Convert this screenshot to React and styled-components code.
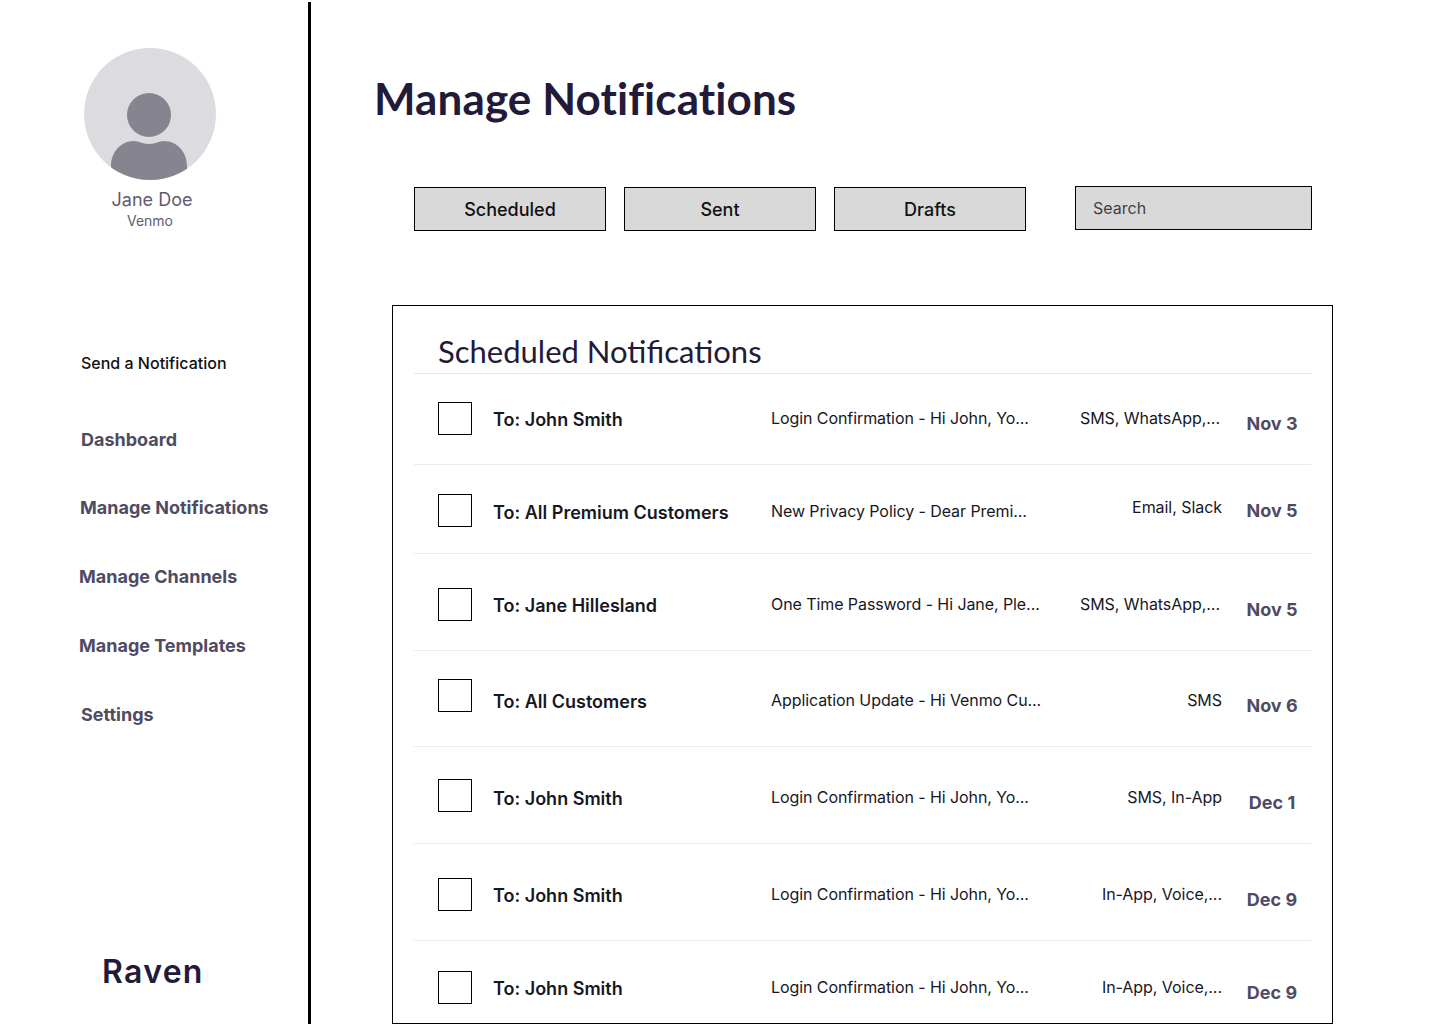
import React from "react";
import styled, { createGlobalStyle } from "styled-components";

const Global = createGlobalStyle`
  html, body { margin: 0; padding: 0; background: #fff; }
  body { font-family: "Inter", "Liberation Sans", sans-serif; overflow: hidden; }
  * { box-sizing: border-box; }
`;

const Page = styled.div`
  display: flex;
  width: 1436px;
  height: 1024px;
  overflow: hidden;
`;

const Sidebar = styled.aside`
  flex: 0 0 311px;
  height: 1022px;
  margin-top: 2px;
  border-right: 3px solid #000;
  display: flex;
  flex-direction: column;
`;

const Profile = styled.div`
  display: flex;
  flex-direction: column;
  align-items: center;
  padding-top: 46px;
  width: 300px;
`;

const Avatar = styled.svg`
  width: 132px;
  height: 132px;
  display: block;
`;

const ProfileName = styled.div`
  font-size: 18px;
  line-height: 22px;
  margin-top: 9px;
  margin-left: 4px;
  color: #5f5b70;
`;

const ProfileOrg = styled.div`
  font-size: 14px;
  line-height: 18px;
  margin-top: 1px;
  color: #5f5b70;
`;

const Nav = styled.nav`
  display: flex;
  flex-direction: column;
  margin-top: 123px;
`;

const SendLink = styled.div`
  font-size: 16px;
  font-weight: 500;
  line-height: 20px;
  color: #111;
  padding-left: 81px;
  margin-bottom: 56px;
`;

const NavItem = styled.div`
  font-size: 18px;
  font-weight: 700;
  line-height: 22px;
  color: #4f4b63;
  padding-left: ${(p) => p.$indent}px;
  margin-bottom: ${(p) => p.$gap}px;
`;

const Brand = styled.div`
  margin-top: auto;
  margin-bottom: 32px;
  padding-left: 102px;
  font-family: "Inter", sans-serif;
  font-size: 32px;
  font-weight: 600;
  letter-spacing: 1.3px;
  line-height: 40px;
  color: #231a3a;
`;

const Main = styled.main`
  flex: 1;
  min-width: 0;
  display: flex;
  flex-direction: column;
  padding-left: 64px;
`;

const Title = styled.h1`
  margin: 70px 0 0 -1px;
  font-family: "Lato", sans-serif;
  font-size: 44px;
  font-weight: 700;
  letter-spacing: 0.1px;
  line-height: 56px;
  color: #231a3a;
`;

const Toolbar = styled.div`
  display: flex;
  align-items: flex-start;
  margin: 60px 0 0 39px;
`;

const TabButton = styled.button`
  width: 192px;
  height: 44px;
  margin: 1px 18px 0 0;
  border: 1px solid #000;
  border-radius: 0;
  background: #d9d9d9;
  color: #111;
  font-family: inherit;
  font-size: 18px;
  font-weight: 500;
  line-height: 22px;
  padding: 2px 0 0;
`;

const Search = styled.input`
  width: 237px;
  height: 44px;
  margin-left: 31px;
  padding: 0 17px;
  border: 1px solid #000;
  border-radius: 0;
  background: #d9d9d9;
  font-family: inherit;
  font-size: 16px;
  &::placeholder { color: #3f3f46; opacity: 1; }
`;

const Card = styled.section`
  margin: 74px 0 0 17px;
  width: 941px;
  height: 719px;
  border: 1px solid #000;
  padding: 0 21px;
  overflow: hidden;
`;

const CardTitle = styled.h2`
  margin: 0 -1px 0 0;
  height: 68px;
  padding: 26px 0 0 24px;
  font-family: "Lato", sans-serif;
  font-size: 31px;
  font-weight: 400;
  line-height: 38px;
  color: #231a3a;
  border-bottom: 1px solid #e6e6e6;
`;

const Row = styled.div`
  display: grid;
  grid-template-columns: 34px 278px 310px 162px 90px;
  align-items: start;
  padding-left: 24px;
  height: ${(p) => p.$h}px;
  border-bottom: 1px solid #ececec;
`;

const Check = styled.span`
  display: block;
  width: 34px;
  height: 33px;
  border: 1px solid #000;
  margin-top: ${(p) => p.$top}px;
`;

const Recipient = styled.div`
  font-size: 18px;
  font-weight: 600;
  line-height: 20px;
  color: #17171f;
  margin: ${(p) => p.$top}px 0 0 21px;
  white-space: nowrap;
`;

const Subject = styled.div`
  font-size: 16px;
  line-height: 20px;
  letter-spacing: -0.08px;
  color: #17171f;
  margin: ${(p) => p.$top}px 0 0 21px;
  white-space: nowrap;
`;

const Channels = styled.div`
  font-size: 16px;
  line-height: 20px;
  letter-spacing: -0.05px;
  color: #17171f;
  text-align: right;
  margin-top: ${(p) => p.$top}px;
  padding-right: ${(p) => p.$inset}px;
  white-space: nowrap;
`;

const DateCell = styled.div`
  font-size: 18px;
  font-weight: 700;
  line-height: 20px;
  color: #4f4b63;
  text-align: center;
  padding-left: 10px;
  margin-top: ${(p) => p.$top}px;
`;

const navItems = [
  ["Dashboard", 81, 46],
  ["Manage Notifications", 80, 47],
  ["Manage Channels", 79, 47],
  ["Manage Templates", 79, 47],
  ["Settings", 81, 47],
];

const rows = [
  { h: 91, to: "John Smith", sub: "Login Confirmation - Hi John, Yo...", ch: "SMS, WhatsApp,...", inset: 2, date: "Nov 3", c: 28, t: 36, s: 34, k: 34, d: 40 },
  { h: 89, to: "All Premium Customers", sub: "New Privacy Policy - Dear Premi...", ch: "Email, Slack", inset: 0, date: "Nov 5", c: 29, t: 38, s: 36, k: 32, d: 36 },
  { h: 97, to: "Jane Hillesland", sub: "One Time Password - Hi Jane, Ple...", ch: "SMS, WhatsApp,...", inset: 2, date: "Nov 5", c: 34, t: 42, s: 40, k: 40, d: 46 },
  { h: 96, to: "All Customers", sub: "Application Update - Hi Venmo Cu...", ch: "SMS", inset: 0, date: "Nov 6", c: 28, t: 41, s: 39, k: 39, d: 45 },
  { h: 97, to: "John Smith", sub: "Login Confirmation - Hi John, Yo...", ch: "SMS, In-App", inset: 0, date: "Dec 1", c: 32, t: 42, s: 40, k: 40, d: 46 },
  { h: 97, to: "John Smith", sub: "Login Confirmation - Hi John, Yo...", ch: "In-App, Voice,...", inset: 0, date: "Dec 9", c: 34, t: 42, s: 40, k: 40, d: 46 },
  { h: 97, to: "John Smith", sub: "Login Confirmation - Hi John, Yo...", ch: "In-App, Voice,...", inset: 0, date: "Dec 9", c: 30, t: 38, s: 36, k: 36, d: 42 },
];

export default function App() {
  return (
    <Page>
      <Global />
      <Sidebar>
        <Profile>
          <Avatar viewBox="0 0 132 132">
            <defs>
              <clipPath id="avatar-clip">
                <circle cx="66" cy="66" r="66" />
              </clipPath>
            </defs>
            <circle cx="66" cy="66" r="66" fill="#dcdce0" />
            <circle cx="65" cy="67" r="22" fill="#85848f" />
            <path
              clipPath="url(#avatar-clip)"
              d="M27 132V118C27 104 37 93 50 93C55 93 58 96 65 96C72 96 75 93 80 93C93 93 103 104 103 118V132Z"
              fill="#85848f"
            />
          </Avatar>
          <ProfileName>Jane Doe</ProfileName>
          <ProfileOrg>Venmo</ProfileOrg>
        </Profile>
        <Nav>
          <SendLink>Send a Notification</SendLink>
          {navItems.map(([label, indent, gap]) => (
            <NavItem key={label} $indent={indent} $gap={gap}>{label}</NavItem>
          ))}
        </Nav>
        <Brand>Raven</Brand>
      </Sidebar>
      <Main>
        <Title>Manage Notifications</Title>
        <Toolbar>
          <TabButton>Scheduled</TabButton>
          <TabButton>Sent</TabButton>
          <TabButton>Drafts</TabButton>
          <Search placeholder="Search" />
        </Toolbar>
        <Card>
          <CardTitle>Scheduled Notifications</CardTitle>
          {rows.map((r, i) => (
            <Row key={i} $h={r.h}>
              <Check $top={r.c} />
              <Recipient $top={r.t}>To: {r.to}</Recipient>
              <Subject $top={r.s}>{r.sub}</Subject>
              <Channels $top={r.k} $inset={r.inset}>{r.ch}</Channels>
              <DateCell $top={r.d}>{r.date}</DateCell>
            </Row>
          ))}
        </Card>
      </Main>
    </Page>
  );
}
